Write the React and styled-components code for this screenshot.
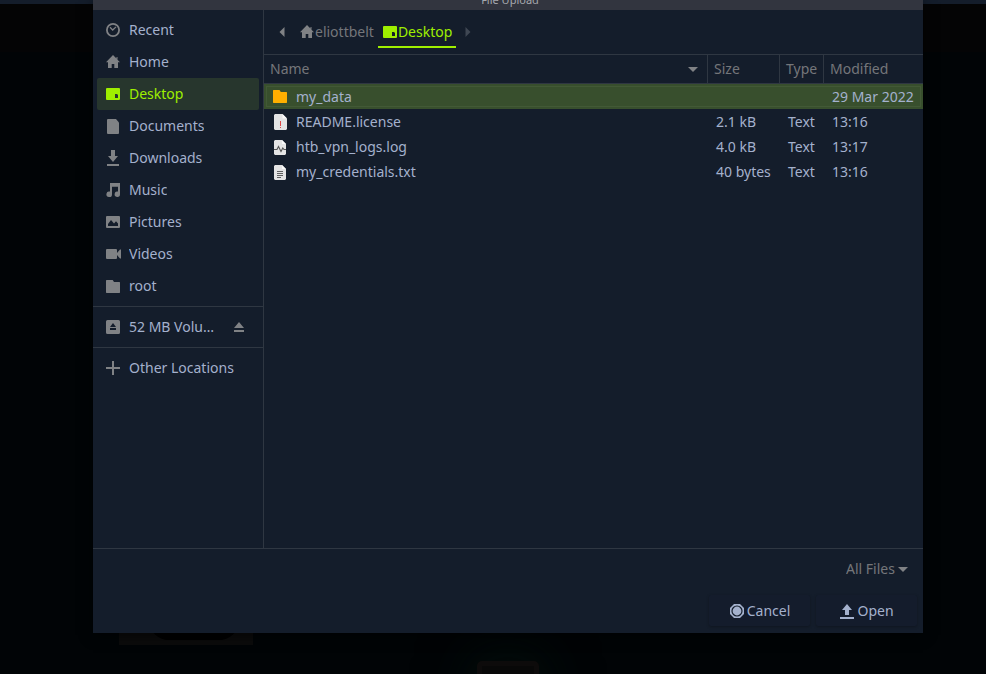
import React from "react";
import styled, { createGlobalStyle, css } from "styled-components";

const c = {
  page: "#010406",
  panel: "#141d2b",
  line: "#2f3742",
  title: "#32353f",
  text: "#a4b1cd",
  dim: "#74767a",
  icon: "#808285",
  green: "#9fef00",
  side: "#27362d",
  row: "#384f2d",
};

const GlobalStyle = createGlobalStyle`
  * { box-sizing: border-box; }
  body { margin: 0; background: ${c.page}; overflow: hidden; }
  button, select, table { font: inherit; color: inherit; }
  button { border: 0; background: none; padding: 0; margin: 0; text-align: left; }
`;

const Page = styled.div`
  position: relative;
  display: flex;
  min-height: 100vh;
  padding: 0 63px 41px 93px;
  font: 14px/20px "Noto Sans", sans-serif;
  color: ${c.text};
`;

const Backdrop = styled.div`
  position: absolute;
  inset: 0;
  overflow: hidden;
  background: linear-gradient(${c.panel} 4px, #040405 4px, #040405 52px, ${c.page} 52px);
`;

const Thumbnail = styled.div`
  position: absolute;
  left: 119px;
  bottom: 29px;
  width: 134px;
  height: 40px;
  overflow: hidden;
  background: #0b0b0b;
  &::after {
    content: "";
    position: absolute;
    left: 30px;
    bottom: 5px;
    width: 90px;
    height: 40px;
    border-radius: 20px;
    background: #000;
  }
`;

const Glow = styled.div`
  position: absolute;
  left: 477px;
  bottom: -49px;
  width: 62px;
  height: 62px;
  border: 5px solid #0d0b0b;
  border-radius: 5px;
  background: #080808;
  box-shadow: 0 0 50px 8px #030d0b;
`;

const Dialog = styled.main`
  position: relative;
  flex: 1;
  min-width: 0;
  display: flex;
  flex-direction: column;
  background: ${c.panel};
  box-shadow: 0 2px 12px rgba(0, 0, 0, 0.6);
`;

const TitleBar = styled.header`
  display: flex;
  align-items: flex-end;
  justify-content: center;
  height: 10px;
  overflow: hidden;
  background: ${c.title};
`;

const Title = styled.h1`
  margin: 0;
  padding: 0 0 0 4px;
  font-size: 11px;
  line-height: 20px;
  font-weight: 400;
  color: #a5a8ae;
`;

const Body = styled.div`
  flex: 1;
  display: grid;
  grid-template-columns: 171px minmax(0, 1fr);
`;

const Sidebar = styled.nav`
  border-right: 1px solid ${c.line};
`;

const PlaceList = styled.ul`
  margin: 0;
  padding: 4px;
  list-style: none;
  & + & { border-top: 1px solid ${c.line}; }
`;

const PlaceItem = styled.li`
  display: flex;
  align-items: center;
  height: 32px;
  padding: 0 12px 0 8px;
  border-radius: 2px;
  color: ${c.text};
  ${(p) => p.$active && css`background: ${c.side}; color: ${c.green};`}
`;

const PlaceButton = styled.button`
  flex: 1;
  min-width: 0;
  display: flex;
  align-items: center;
  gap: 8px;
  svg { color: ${(p) => (p.$active ? c.green : c.icon)}; }
`;

const Label = styled.span`
  overflow: hidden;
  text-overflow: ellipsis;
  white-space: nowrap;
`;

const EjectButton = styled.button`
  display: flex;
  margin-left: 12px;
  color: ${c.icon};
`;

const Glyph = styled.svg`
  display: block;
  flex: none;
  width: 16px;
  height: 16px;
  fill: currentColor;
`;

const Content = styled.section`
  display: flex;
  flex-direction: column;
`;

const PathBar = styled.div`
  display: flex;
  align-items: center;
  height: 45px;
  padding: 0 10px;
  border-bottom: 1px solid ${c.line};
`;

const ArrowButton = styled.button`
  display: flex;
  color: ${(p) => (p.disabled ? "#3f4753" : c.icon)};
`;

const Crumb = styled.button`
  display: flex;
  align-items: center;
  height: 32px;
  padding: 0 4px;
  color: ${c.dim};
  border-bottom: 2px solid transparent;
  border-top: 2px solid transparent;
  svg { color: ${c.icon}; }
  ${(p) => p.$active && css`
    color: ${c.green};
    border-bottom-color: ${c.green};
    svg { color: ${c.green}; }
  `}
`;

const Crumbs = styled.div`
  display: flex;
  margin: 0 4px 0 5px;
`;

const FileTable = styled.table`
  width: 100%;
  table-layout: fixed;
  border-collapse: separate;
  border-spacing: 0;
  white-space: nowrap;
`;

const HeadCell = styled.th`
  width: ${(p) => p.$width || "auto"};
  height: 29px;
  padding: 0 6px;
  text-align: left;
  font-weight: 400;
  color: ${c.dim};
  border-bottom: 1px solid ${c.line};
  &:not(:last-child) { border-right: 1px solid ${c.line}; }
`;

const SortButton = styled.button`
  display: flex;
  align-items: center;
  justify-content: space-between;
  width: 100%;
  svg { color: ${c.icon}; }
`;

const FileRow = styled.tr`
  height: 25px;
  ${(p) => p.$selected && css`
    background: ${c.row};
    outline: 1px solid #425936;
    outline-offset: -3px;
  `}
`;

const Cell = styled.td`
  padding: 0 0 0 8px;
`;

const FileName = styled.div`
  display: flex;
  align-items: center;
  gap: 8px;
`;

const Footer = styled.footer`
  display: flex;
  flex-direction: column;
  align-items: flex-end;
  gap: 10px;
  padding: 4px 6px 7px;
  border-top: 1px solid ${c.line};
`;

const FilterField = styled.label`
  display: flex;
  align-items: center;
  height: 32px;
  padding-right: 6px;
  color: ${c.dim};
  svg { color: ${c.icon}; }
`;

const FilterSelect = styled.select`
  appearance: none;
  border: 0;
  padding: 0;
  background: transparent;
`;

const Actions = styled.div`
  display: flex;
  gap: 6px;
`;

const ActionButton = styled.button`
  display: flex;
  align-items: center;
  justify-content: center;
  gap: 2px;
  width: 101px;
  height: 31px;
  border-radius: 2px;
  background: #141c2c;
  box-shadow: 0 1px 3px rgba(0, 0, 0, 0.28);
`;

const shapes = {
  recent: (
    <g fill="none" stroke="currentColor">
      <circle cx="8" cy="8" r="6.1" strokeWidth="1.8" />
      <path d="M5 5.3 7.7 8 11 4.9" strokeWidth="1.3" />
    </g>
  ),
  home: <path d="M8 1 1 8.2h2V14h3.7v-4h2.6v4H13V8.2h2L12.5 5.7V3h-1v1.6z" />,
  desktop: <path fillRule="evenodd" d="M2 2h12a1 1 0 0 1 1 1v10a1 1 0 0 1-1 1H2a1 1 0 0 1-1-1V3a1 1 0 0 1 1-1zM10 8v4h3V9l-1-1z" />,
  document: <path d="M3 1h8l3 3.5V15a1 1 0 0 1-1 1H3a1 1 0 0 1-1-1V2a1 1 0 0 1 1-1z" />,
  download: <path d="M6 0h4v6h3l-5 6-5-6h3zM2 14h12v2H2z" />,
  music: <path d="M5 1h10v11.2a2.7 2.7 0 1 1-2-2.6V4.8H7v7.4a2.8 2.8 0 1 1-2-2.6z" />,
  picture: <path fillRule="evenodd" d="M2 2h12a1 1 0 0 1 1 1v10a1 1 0 0 1-1 1H2a1 1 0 0 1-1-1V3a1 1 0 0 1 1-1zM3 12h10V9.5L11 7.3 9 9.5 6 6 3 10z" />,
  video: <path d="M2 3h9a1 1 0 0 1 1 1v3l3-3.5h1v9h-1L12 9v3a1 1 0 0 1-1 1H2a1 1 0 0 1-1-1V4a1 1 0 0 1 1-1z" />,
  folder: <path d="M1.5 2h6.2L9 4h5.5l.5.5v10l-.5.5h-13l-.5-.5v-12z" />,
  drive: <path fillRule="evenodd" d="M2.5 1h11A1.5 1.5 0 0 1 15 2.5v11a1.5 1.5 0 0 1-1.5 1.5h-11A1.5 1.5 0 0 1 1 13.5v-11A1.5 1.5 0 0 1 2.5 1zM8 4 5 8h6zM5 9h6v2H5z" />,
  eject: <path d="M8 3 3 9h10zM3 11h10v2H3z" />,
  plus: <path d="M7 1h2v6h6v2H9v6H7V9H1V7h6z" />,
  left: <path d="M10.5 3v10L5.5 8z" />,
  right: <path d="M5.5 3v10l5-5z" />,
  down: <path d="M3 6h10l-5 5z" />,
  cancel: (
    <>
      <path d="M5 1h6l4 4v6l-4 4H5l-4-4V5z" />
      <circle cx="8" cy="8" r="5" fill="none" stroke="#141d2b" strokeWidth="1.2" />
    </>
  ),
  open: <path d="M8 1 3 7h3v5h4V7h3zM1 14h14v2H1z" />,
  fileFolder: <path fill="#ffaf00" d="M1.5 1h6l1.3 2h5.7l.5.5v10l-.5.5h-13l-.5-.5v-12z" />,
  license: (
    <>
      <path fill="#e4e4e4" d="M3 0h7.5L15 4.5V15l-1 1H3l-1-1V1z" />
      <path fill="#fafafa" d="M10.5 0 15 4.5h-4.5z" />
      <path fill="#e04848" d="M8 7h1v5H8zM8 13h1v1H8z" />
    </>
  ),
  log: (
    <>
      <path fill="#e4e4e4" d="M3 1h7l4 4v10l-1 1H3l-1-1V2z" />
      <path fill="#fafafa" d="m10 1 4 4h-4z" />
      <path fill="none" stroke="#555" strokeWidth="1.1" d="M2 10.5h3l1.5-3 2.5 5 1.8-3.5 1.2 1.5h2" />
    </>
  ),
  text: (
    <>
      <path fill="#e4e4e4" d="M3 1h7l4 4v10l-1 1H3l-1-1V2z" />
      <path fill="#fafafa" d="m10 1 4 4h-4z" />
      <path fill="#606060" d="M5 7h6v1H5zM5 9h6v1H5zM5 11h6v1H5zM5 13h4v1H5z" />
    </>
  ),
};

const Icon = ({ name }) => (
  <Glyph viewBox="0 0 16 16" aria-hidden="true">{shapes[name]}</Glyph>
);

const places = [
  ["recent", "Recent"],
  ["home", "Home"],
  ["desktop", "Desktop"],
  ["document", "Documents"],
  ["download", "Downloads"],
  ["music", "Music"],
  ["picture", "Pictures"],
  ["video", "Videos"],
  ["folder", "root"],
];

const files = [
  ["fileFolder", "my_data", "", "", "29 Mar 2022"],
  ["license", "README.license", "2.1 kB", "Text", "13:16"],
  ["log", "htb_vpn_logs.log", "4.0 kB", "Text", "13:17"],
  ["text", "my_credentials.txt", "40 bytes", "Text", "13:16"],
];

function Place({ icon, label, active, children }) {
  return (
    <PlaceItem $active={active}>
      <PlaceButton type="button" $active={active}>
        <Icon name={icon} />
        <Label>{label}</Label>
      </PlaceButton>
      {children}
    </PlaceItem>
  );
}

export default function App() {
  return (
    <Page>
      <GlobalStyle />
      <Backdrop>
        <Thumbnail />
        <Glow />
      </Backdrop>
      <Dialog>
        <TitleBar><Title>File Upload</Title></TitleBar>
        <Body>
          <Sidebar aria-label="Places">
            <PlaceList>
              {places.map(([icon, label]) => (
                <Place key={label} icon={icon} label={label} active={label === "Desktop"} />
              ))}
            </PlaceList>
            <PlaceList>
              <Place icon="drive" label="52 MB Volume">
                <EjectButton type="button" aria-label="Eject"><Icon name="eject" /></EjectButton>
              </Place>
            </PlaceList>
            <PlaceList>
              <Place icon="plus" label="Other Locations" />
            </PlaceList>
          </Sidebar>
          <Content>
            <PathBar>
              <ArrowButton type="button" aria-label="Back"><Icon name="left" /></ArrowButton>
              <Crumbs>
                <Crumb type="button"><Icon name="home" />eliottbelt</Crumb>
                <Crumb type="button" $active><Icon name="desktop" />Desktop</Crumb>
              </Crumbs>
              <ArrowButton type="button" aria-label="Forward" disabled><Icon name="right" /></ArrowButton>
            </PathBar>
            <FileTable>
              <thead>
                <tr>
                  <HeadCell><SortButton type="button">Name<Icon name="down" /></SortButton></HeadCell>
                  <HeadCell $width="72px">Size</HeadCell>
                  <HeadCell $width="44px">Type</HeadCell>
                  <HeadCell $width="99px">Modified</HeadCell>
                </tr>
              </thead>
              <tbody>
                {files.map(([icon, name, size, type, modified], i) => (
                  <FileRow key={name} $selected={i === 0}>
                    <Cell><FileName><Icon name={icon} />{name}</FileName></Cell>
                    <Cell>{size}</Cell>
                    <Cell>{type}</Cell>
                    <Cell>{modified}</Cell>
                  </FileRow>
                ))}
              </tbody>
            </FileTable>
          </Content>
        </Body>
        <Footer>
          <FilterField>
            <FilterSelect aria-label="File type"><option>All Files</option></FilterSelect>
            <Icon name="down" />
          </FilterField>
          <Actions>
            <ActionButton type="button"><Icon name="cancel" />Cancel</ActionButton>
            <ActionButton type="button"><Icon name="open" />Open</ActionButton>
          </Actions>
        </Footer>
      </Dialog>
    </Page>
  );
}
